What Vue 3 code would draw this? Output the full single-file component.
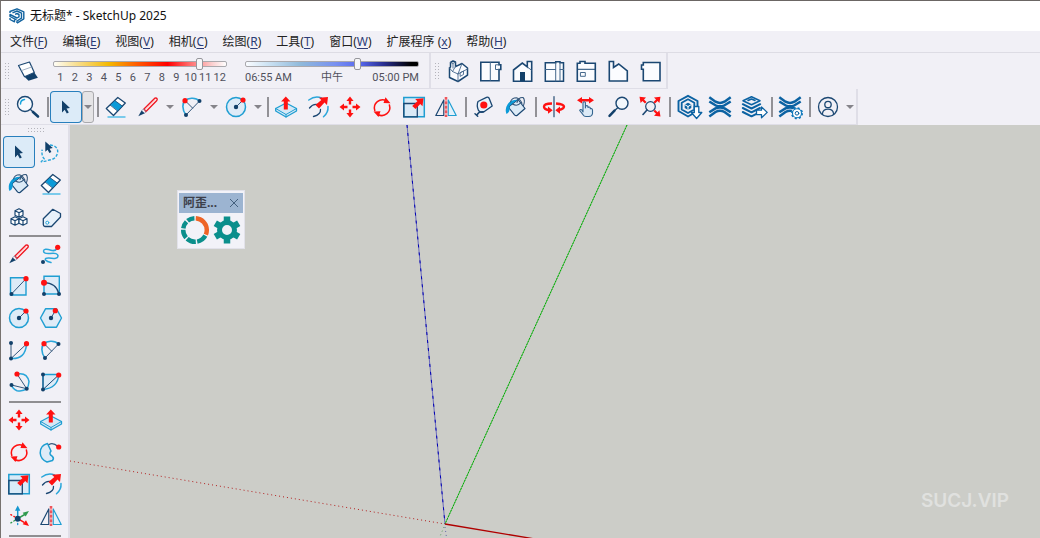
<script setup>
import { ref } from 'vue'

const menus = [
  ['文件', 'F'], ['编辑', 'E'], ['视图', 'V'], ['相机', 'C'], ['绘图', 'R'],
  ['工具', 'T'], ['窗口', 'W'], ['扩展程序 ', 'x'], ['帮助', 'H'],
]

const views = [
  ['iso', '等轴视图'], ['top', '俯视图'], ['front', '前视图'], ['right', '右视图'],
  ['back', '后视图'], ['left', '左视图'], ['bottom', '底视图'],
]

const sep = { sep: true }
const tool = (icon, label, menu = false) => ({ icon, label, menu })

const mainTools = [
  tool('search', '搜索'), sep,
  tool('cursor', '选择', true), sep,
  tool('eraser', '橡皮擦'), tool('pencil', '直线', true), tool('arc2', '圆弧', true), tool('circle', '圆', true), sep,
  tool('push', '推/拉'), tool('offset', '偏移'), tool('move', '移动'), tool('rotate', '旋转'), tool('scale', '缩放'), tool('flip', '翻转'), sep,
  tool('tape', '卷尺'), tool('paint', '材质'), sep,
  tool('orbit', '环绕观察'), tool('pan', '平移'), tool('zoom', '视图缩放'), tool('extents', '充满视窗'), sep,
  tool('warehouse', '3D Warehouse'), tool('extension', 'Extension Warehouse'), tool('layout', '发送到 LayOut'), sep,
  tool('manager', '扩展程序管理器'), sep,
  tool('user', '账户', true),
]

const sideGroups = [
  [['cursor', '选择'], ['lasso', '套索选择'], ['paint', '材质'], ['eraser', '橡皮擦'], ['component', '组件'], ['tag', '标记']],
  [['pencil', '直线'], ['freehand', '手绘线'], ['rect', '矩形'], ['rotrect', '旋转矩形'], ['circle', '圆'], ['polygon', '多边形'],
    ['arc', '圆弧'], ['arc2', '两点圆弧'], ['arc3', '三点圆弧'], ['pie', '扇形']],
  [['move', '移动'], ['push', '推/拉'], ['rotate', '旋转'], ['follow', '路径跟随'], ['scale', '缩放'], ['offset', '偏移'], ['axes', '坐标轴'], ['flip', '翻转']],
]

const active = ref('cursor')
const month = ref(861)
const time = ref(655)
const panelOpen = ref(true)
</script>

<template>
  <svg class="sprite" aria-hidden="true">
    <defs>
      <symbol id="search" viewBox="0 0 32 32">
        <circle cx="13" cy="13" r="7.5" stroke="#1b4772" stroke-width="1.4" fill="#f8fafd" />
        <path d="M8.5 13a4.5 4.5 0 0 1 4-4.500" stroke="#19a5dc" stroke-width="1.5" />
        <path d="M18.500 18.500L21 21" stroke="#1b4772" stroke-width="1.300" />
        <path d="M21 21l5 4.500" stroke="#12406a" stroke-width="2.600" />
      </symbol>
      <symbol id="cursor" viewBox="0 0 32 32">
        <path d="M12 9.500l8 7.500-3.500.5 2.300 4-2 1-2.100-3.800L12 21.500z" fill="#12406a" />
      </symbol>
      <symbol id="eraser" viewBox="0 0 32 32">
        <path d="M7.500 26h18" stroke="#6cc6ea" stroke-width="1.800" stroke-linecap="butt" />
        <path d="M6.300 17.500L17.800 6.500L25.300 12L13.500 24.500z" fill="#fff" stroke="#1b4772" stroke-width="1.300" />
        <path d="M10.300 13.700L14.800 9.500L22.400 15.100L18 19.900z" fill="#0b9bd8" stroke="#1b4772" stroke-width=".8" />
      </symbol>
      <symbol id="pencil" viewBox="0 0 32 32">
        <path d="M12 18L22.800 7.200q1.600-.6 2.200.5t-.4 2.100L14 20.500z" fill="#fff" stroke="#f01822" stroke-width="1.400" />
        <path d="M13 19.300L23.500 8.800" stroke="#f9a0a4" stroke-width=".6" />
        <path d="M6.300 25.200L9.500 19.500L12.800 22.200z" fill="#12406a" />
        <path d="M9.700 19.500l2-1.500 2.500 2.500-1.500 1.700" stroke="#6f83a0" stroke-width=".7" />
      </symbol>
      <symbol id="arc2" viewBox="0 0 32 32">
        <path d="M10 24C5.500 18 6.500 12 9 9.700S19 5.500 23.500 10" stroke="#2aa6da" stroke-width="1.600" />
        <path d="M10 24L23.500 10M9.500 10l7 7" stroke="#35587c" />
        <circle cx="23.500" cy="10" r="2" fill="#12406a" /><circle cx="10" cy="24" r="2" fill="#12406a" />
        <circle cx="9" cy="9.700" r="2.600" fill="#f11" />
      </symbol>
      <symbol id="circle" viewBox="0 0 32 32">
        <circle cx="16" cy="16" r="9.500" fill="#deebf7" stroke="#1f9ed2" stroke-width="1.500" />
        <path d="M16 16l7-7" stroke="#35587c" />
        <circle cx="16" cy="16" r="2.200" fill="#12406a" /><circle cx="23" cy="9" r="2.600" fill="#f11" />
      </symbol>
      <symbol id="push" viewBox="0 0 32 32">
        <path d="M5.700 17.500L16 12l10.500 5.500v2.500L16 26L5.700 20z" fill="#d5e8f6" stroke="#1f9ed2" stroke-width="1.300" />
        <path d="M5.700 17.500L16 23.500l10.500-6M16 23.500V26" stroke="#1f9ed2" />
        <path d="M15.800 5.500l4.700 5h-2.700v8h-4v-8h-2.700z" fill="#f11" />
      </symbol>
      <symbol id="offset" viewBox="0 0 32 32">
        <path d="M6.800 9Q13 4.500 19.500 7M26 15.500q.5 6-4.500 10.300" stroke="#2aa6da" stroke-width="1.500" />
        <path d="M7.500 17q3.500-4.500 8-3.500M18.500 18.500q.5 5-7 7" stroke="#1b4772" stroke-width="1.300" />
        <path d="M26 6l-1 8-2.500-2.500L17 17.500l-3.500-3.400L19.300 9 17 6.800z" fill="#f11" />
      </symbol>
      <symbol id="move" viewBox="0 0 32 32">
        <path d="M16 5.500l3.600 4.500h-2.400v3.500h-2.400V10h-2.400zM16 26.500l3.600-4.500h-2.400v-3.500h-2.400V22h-2.400zM5.500 16l4.500-3.600v2.400h3.500v2.400H10v2.400zM26.500 16L22 12.400v2.400h-3.500v2.400H22v2.400z" fill="#f11" />
      </symbol>
      <symbol id="rotate" viewBox="0 0 32 32">
        <path d="M8.800 19.500C6.500 12 14 6.500 20.500 9.700M23.400 14C25.500 21 18.500 27 11.800 23.500" stroke="#f11" stroke-width="1.500" />
        <path d="M19.500 6.300L24.500 12.300L17.500 12zM12.500 26L7.500 20.500l7-.2z" fill="#f11" />
      </symbol>
      <symbol id="scale" viewBox="0 0 32 32">
        <path d="M5.800 6.500h20.500v19.300H5.800z" fill="#d9eaf7" stroke="#1f9ed2" stroke-width="1.500" stroke-linejoin="miter" />
        <path d="M5.800 12.500h13.500v13.300H5.800z" stroke="#1b4772" stroke-width="1.300" stroke-linejoin="miter" />
        <path d="M25.500 7.300l-1 8-2.300-2.300-4.700 5-3.300-3 5.200-4.800-2.200-2.100z" fill="#f11" />
      </symbol>
      <symbol id="flip" viewBox="0 0 32 32">
        <path d="M13.800 9v15.500H5.800z" stroke="#1b4772" stroke-width="1.200" />
        <path d="M18.200 9v15.500h8z" fill="#e4f1fa" stroke="#1f9ed2" stroke-width="1.200" />
        <path d="M16 6v20" stroke="#f9a9ac" stroke-width="2.400" stroke-linecap="butt" />
        <path d="M16 6v20" stroke="#ee555c" stroke-width="2.400" stroke-dasharray="2.500 2" stroke-linecap="butt" />
      </symbol>
      <symbol id="tape" viewBox="0 0 32 32">
        <path d="M10 10.500l8.500-4.200q1.500-.5 2.500.7L24.200 15 16 20.800q-3 1.600-5.500-1.300-2.200-5-.5-9z" fill="#e8f1fa" stroke="#1b4772" stroke-width="1.300" />
        <path d="M15.500 20.800q-4.300-.7-6.300 2.700M7 22.800l2.700 2.500" stroke="#1b4772" stroke-width="1.500" />
        <circle cx="15.800" cy="14" r="3.600" fill="#f11" />
      </symbol>
      <symbol id="paint" viewBox="0 0 32 32">
        <path d="M9.500 15L18 8.500l7 9L17 24.500q-1.300.6-2.500-.6L9 17z" fill="#dceaf6" stroke="#1b4772" stroke-width="1.200" />
        <path d="M6.500 23q-2-5 1-9.500Q10 8.700 17.500 8.800L9.500 15q1.200 6-3 8z" fill="#0b9bd8" />
        <path d="M10.500 11q1-4.300 6-4.300 3.500 1 5.500 5.500M17 11.500q1.500-5.500 6-5 2.500 2.500.5 8M12.500 13q5 3 8.500-1.500" stroke="#35587c" stroke-width="1.100" />
      </symbol>
      <symbol id="orbit" viewBox="0 0 32 32">
        <path d="M14 12.500C8 12.500 6 14 6 15.700q0 2.500 5 3.500M18 12.500q8 .8 8 3.200-.3 2.500-5.200 3.300" stroke="#f11" stroke-width="2.400" stroke-linecap="butt" />
        <path d="M10 15.500l4.700 3.700L10 22.700zM22 15.500l-4.700 3.700L22 22.700z" fill="#f11" />
        <path d="M16 5.700v20" stroke="#35587c" stroke-width="1.300" />
      </symbol>
      <symbol id="pan" viewBox="0 0 32 32">
        <path d="M7 9.200l5-3.200v2h7V6l5 3.200-5 3.200v-2h-7v2z" fill="#f11" />
        <path d="M13 21V11.500q1.200-1.500 2.400 0V17l.2-2q1.300-1 2.400.3v1.200q1.300-1 2.300.3v.9q2-.5 2.200 1.300v3.500q-.5 3-3.500 3h-3q-2 0-3-1.800L9.700 19.500q.5-1.500 2-.7z" fill="#dceaf6" stroke="#35658f" stroke-width="1.100" />
      </symbol>
      <symbol id="zoom" viewBox="0 0 32 32">
        <circle cx="20" cy="12.300" r="6" fill="#f2f7fc" stroke="#1b4772" stroke-width="1.400" />
        <path d="M15.700 16.700l-3 2.800" stroke="#1b4772" stroke-width="1.300" /><path d="M12.500 19.700L7.500 24.800" stroke="#12406a" stroke-width="2.500" />
      </symbol>
      <symbol id="extents" viewBox="0 0 32 32">
        <circle cx="16.500" cy="15.500" r="4.800" stroke="#1b4772" stroke-width="1.200" />
        <path d="M13 19l-4 4.500" stroke="#1b4772" stroke-width="1.600" />
        <path d="M5.500 5.800l6.500.8-2 2 2.500 2.400-1.500 1.600L8.400 10l-1.800 2zM26.500 5.800l-6.500.8 2 2-2.500 2.400 1.500 1.600 2.600-2.600 1.800 2zM26.500 25.500l-6.500-.8 2-2-2.500-2.400 1.500-1.600 2.600 2.600 1.800-2z" fill="#f11" />
      </symbol>
      <symbol id="warehouse" viewBox="0 0 32 32">
        <path d="M16 4.800l9.500 5.200v10L16 25.500 6.500 20V10z" stroke="#0b62a2" stroke-width="1.900" />
        <path d="M16 8.300l6.300 3.500v6.700L16 22l-6.300-3.500v-6.700z" stroke="#0b62a2" stroke-width="1.800" />
        <path d="M16 11.800l3.300 1.800v3.500L16 19l-3.300-1.900v-3.500z" fill="#0b62a2" />
        <path d="M16 15.500V19M16 15.500l-3-1.700M16 15.500l3-1.700" stroke="#fff" />
        <path d="M22.300 15.500h4.500v6h3l-5.200 6-5.200-6h2.900z" fill="#fff" stroke="#0b62a2" stroke-width="1.300" />
      </symbol>
      <symbol id="cross" viewBox="0 0 32 32">
        <path d="M5.300 6.200l6.200 4.500q4.500 2.600 9 0l6.200-4.500M5.300 10.500l6.200 3.800q4.500 2 9 0l6.200-3.800M5.300 21.200l6.200-3.800q4.500-2 9 0l6.200 3.800M5.300 25.500l6.200-4.500q4.500-2.600 9 0l6.200 4.500" stroke="#0b62a2" stroke-width="2.500" stroke-linecap="butt" />
      </symbol>
      <symbol id="extension" viewBox="0 0 32 32"><use href="#cross" width="32" height="32" /></symbol>
      <symbol id="layout" viewBox="0 0 32 32">
        <path d="M7 9.700l8.500-4 8.500 4-8.500 4zM12 9.500l3.500-1.500 3.500 1.500" stroke="#0b62a2" stroke-width="1.500" />
        <path d="M6.800 13.200l8.700 4.300 8.700-4.300M6.800 17l8.700 4.300L24 17M6.800 21l8.700 4.300 5-2.500" stroke="#0b62a2" stroke-width="2" />
        <path d="M20.500 19.200h5v-3.200l5.700 5.400-5.700 5.400v-3.200h-5z" fill="#fff" stroke="#0b62a2" stroke-width="1.300" />
      </symbol>
      <symbol id="manager" viewBox="0 0 32 32">
        <use href="#cross" width="32" height="32" />
        <circle cx="23" cy="22.300" r="5.700" fill="#f0f0f6" />
        <circle cx="23" cy="22.300" r="4.500" fill="#fff" stroke="#0b76ba" stroke-width="1.100" />
        <circle cx="23" cy="22.300" r="5.300" stroke="#0b76ba" stroke-width="1.500" stroke-dasharray="2.100 2.060" stroke-linecap="butt" />
        <circle cx="23" cy="22.300" r="1.800" stroke="#0b62a2" />
      </symbol>
      <symbol id="user" viewBox="0 0 32 32">
        <circle cx="16" cy="16" r="9.500" stroke="#1b4772" stroke-width="1.300" />
        <circle cx="16" cy="13.500" r="3.200" stroke="#1b4772" stroke-width="1.300" />
        <path d="M10.500 22.500q.5-4.300 5.500-4.300t5.500 4.300" stroke="#1b4772" stroke-width="1.300" />
      </symbol>
      <symbol id="shadow" viewBox="0 0 32 32">
        <path d="M12.500 21.700L22.300 17.500l3.600 5.200-9.400 3z" fill="#12406a" />
        <path d="M6.500 10.500L17.500 7l4.800 10.500-9.800 4.200z" fill="#fff" stroke="#1b4772" stroke-width="1.200" />
        <path d="M9.700 15.500l10.500-3.700" stroke="#8b9db4" stroke-width=".8" />
      </symbol>
      <symbol id="iso" viewBox="0 0 32 32">
        <path d="M7.500 13v9.500l8.500 4 9.500-6.300V13L20 8.500l-6.500 3.200V7l-2.500-1-2.500 1.500v4.500z" fill="#fbfcff" stroke="#1b4772" stroke-width="1.500" />
        <path d="M7.500 13l3 3.500 3-5M10.500 16.500l5.500 2.500 4-10.500M16 19v7.500M16 19l9.500-5M8.500 7.500l2.500 1v4.500M11 8.500L13.500 7" stroke="#45688c" stroke-width=".9" />
        <path d="M18.500 17.500l3-1.500v3.500l-3 1.700z" stroke="#45688c" stroke-width=".9" />
      </symbol>
      <symbol id="top" viewBox="0 0 32 32">
        <path d="M6.800 7.200H25v2.600h1.800v4.700H25V25.800H6.800z" fill="#fbfcff" stroke="#1b4772" stroke-width="1.600" stroke-linejoin="miter" />
        <path d="M16.300 7.500v18M25 9.800h-3.500v4.700H25" stroke="#45688c" />
      </symbol>
      <symbol id="front" viewBox="0 0 32 32">
        <path d="M7.500 26.200V15L16.300 8l5 3.900V6.500h4.400v19.700z" fill="#fbfcff" stroke="#1b4772" stroke-width="1.600" stroke-linejoin="miter" />
        <path d="M21.300 12l4 3" stroke="#45688c" /><path d="M14 17h5v9h-5z" fill="#12406a" />
      </symbol>
      <symbol id="right" viewBox="0 0 32 32">
        <path d="M7.300 7.800h10.400V6.700h4.300v1.100h3.500v18.500H7.300z" fill="#fbfcff" stroke="#1b4772" stroke-width="1.500" stroke-linejoin="miter" />
        <path d="M7.500 14.500h10M22 14.500h3.500M17.700 8v18M22 8v18" stroke="#45688c" />
      </symbol>
      <symbol id="back" viewBox="0 0 32 32">
        <path d="M7.300 8.300H10V6.500h5v1.800h10.300v18H7.300z" fill="#fbfcff" stroke="#1b4772" stroke-width="1.600" stroke-linejoin="miter" />
        <path d="M7.500 14.300h18" stroke="#1b4772" /><path d="M10.800 17.500h4.500v3.800h-4.500z" stroke="#45688c" />
      </symbol>
      <symbol id="left" viewBox="0 0 32 32">
        <path d="M7.300 26V6.500h4.200v6L16.700 9l8.600 7v10z" fill="#fbfcff" stroke="#1b4772" stroke-width="1.600" stroke-linejoin="miter" />
      </symbol>
      <symbol id="bottom" viewBox="0 0 32 32">
        <path d="M9.300 7.500H26v18.300H9.300V14.300H7.500V10h1.800z" fill="#fbfcff" stroke="#1b4772" stroke-width="1.600" stroke-linejoin="miter" />
      </symbol>
      <symbol id="lasso" viewBox="0 0 32 32">
        <path d="M15 9q8 1 7.700 7-1 6-6 7.500-3.500.8-6.500 1.700l-4 .5 3-3q-3-3-2-9" stroke="#2aa6da" stroke-width="1.400" stroke-dasharray="3 1.500" stroke-linecap="butt" />
        <path d="M10.300 5.500l7.500 6.500-3.200.8 1.800 3.200-2 1-1.800-3.200-2.300 2z" fill="#12406a" />
      </symbol>
      <symbol id="component" viewBox="0 0 32 32">
        <g fill="#fff" stroke="#1b4772" stroke-width="1.200">
          <path d="M16 8.700l4 2v4.500l-4 2-4-2v-4.500zM12 10.700l4 2 4-2M16 12.700v4.500" />
          <path d="M12 16.700l4 2v4.500l-4 2-4-2v-4.500zM8 18.700l4 2 4-2M12 20.700v4.500" />
          <path d="M20 16.700l4 2v4.500l-4 2-4-2v-4.500zM16 18.700l4 2 4-2M20 20.700v4.500" />
        </g>
      </symbol>
      <symbol id="tag" viewBox="0 0 32 32">
        <path d="M8.300 18.800L17.800 9.300l7.700 4.200v3.500L16.500 26.500H10q-1.700-.2-1.700-2z" fill="#e8f1fa" stroke="#1b4772" stroke-width="1.300" />
        <circle cx="12.300" cy="22.700" r="1.500" fill="#fff" stroke="#2aa6da" />
      </symbol>
      <symbol id="freehand" viewBox="0 0 32 32">
        <path d="M22.500 10q-2.500 3.700-6.500 2.200Q9 10 8.500 13q0 3 6.500 2.500 8-1 8 2.500T14 20q-4.500-.2-3.500 2 1.500 1.700 5.500 2.500" stroke="#2aa6da" stroke-width="1.500" />
        <circle cx="22.700" cy="9.300" r="2.600" fill="#f11" /><circle cx="8" cy="24" r="2" fill="#12406a" />
      </symbol>
      <symbol id="rect" viewBox="0 0 32 32">
        <path d="M7.500 7.700H23V25H7.500z" fill="#deebf7" stroke="#1f9ed2" stroke-width="1.400" stroke-linejoin="miter" />
        <path d="M8.500 24L23 8.700" stroke="#35587c" /><circle cx="23" cy="8.700" r="2.600" fill="#f11" /><circle cx="8.500" cy="24" r="2" fill="#12406a" />
      </symbol>
      <symbol id="rotrect" viewBox="0 0 32 32">
        <path d="M9 6.200h15.300V24H9z" fill="#deebf7" stroke="#1f9ed2" stroke-width="1.400" stroke-linejoin="miter" />
        <path d="M9 12.700q12 0 15 11.300" stroke="#1b4772" stroke-width="1.200" />
        <circle cx="9" cy="12.700" r="3" fill="#f11" /><circle cx="9" cy="24" r="2" fill="#12406a" /><circle cx="24" cy="24" r="2" fill="#12406a" />
      </symbol>
      <symbol id="polygon" viewBox="0 0 32 32">
        <path d="M5.500 16l5-9.200h11l5 9.200-5 9.200h-11z" fill="#deebf7" stroke="#1f9ed2" stroke-width="1.400" />
        <path d="M16 16l4.300-7.300" stroke="#35587c" /><circle cx="16" cy="16" r="2.200" fill="#12406a" /><circle cx="20.300" cy="8.700" r="2.600" fill="#f11" />
      </symbol>
      <symbol id="arc" viewBox="0 0 32 32">
        <path d="M8 24.500Q22.500 25.500 23.500 10" stroke="#2aa6da" stroke-width="1.500" />
        <path d="M8 9v15.500L23.500 10" stroke="#35587c" /><circle cx="8" cy="9" r="2" fill="#12406a" /><circle cx="8" cy="24.500" r="2" fill="#12406a" /><circle cx="23.500" cy="9.700" r="2.600" fill="#f11" />
      </symbol>
      <symbol id="arc3" viewBox="0 0 32 32">
        <path d="M14 8q10-2 12 7.500-.5 5-2 7.200-4 3-10 2-4.500-2-5.500-5.700" stroke="#2aa6da" stroke-width="1.500" />
        <path d="M8.500 19l15.200 3.700L14 8" stroke="#35587c" /><circle cx="8.500" cy="19" r="2" fill="#12406a" /><circle cx="23.700" cy="22.700" r="2" fill="#12406a" /><circle cx="14" cy="8" r="2.600" fill="#f11" />
      </symbol>
      <symbol id="pie" viewBox="0 0 32 32">
        <path d="M8 8.500h15.700Q23 22 8 23.500z" fill="#deebf7" stroke="#1f9ed2" stroke-width="1.400" />
        <path d="M8 8.500v15L23.700 9" stroke="#1b4772" /><circle cx="8" cy="8.500" r="2" fill="#12406a" /><circle cx="8" cy="23.500" r="2" fill="#12406a" /><circle cx="23.700" cy="9" r="2.600" fill="#f11" />
      </symbol>
      <symbol id="follow" viewBox="0 0 32 32">
        <path d="M12.500 7.500q-7.500 2-7.300 9.500.5 6.500 6.800 9l5.500-1.500q2-2.500-.5-4.500-3.500-2-1-5z" fill="#deebf7" stroke="#1f9ed2" stroke-width="1.500" />
        <path d="M14 8.500q4-2.500 9 2" stroke="#35587c" stroke-width="1.300" />
        <circle cx="23.700" cy="11" r="2.600" fill="#f11" />
      </symbol>
      <symbol id="axes" viewBox="0 0 32 32">
        <path d="M14.700 18V9" stroke="#1697d0" stroke-width="1.500" /><path d="M14.700 5.500l2.700 5.200H12z" fill="#1697d0" />
        <path d="M14.700 18.700l7-4.200" stroke="#2f9b4e" stroke-width="1.500" /><path d="M26 11l-3.300 5.500-3-3.800z" fill="#2f9b4e" />
        <path d="M14.700 18.700l6 3.500" stroke="#f11" stroke-width="1.500" /><path d="M26 26l-6.300-1.700 3.300-4z" fill="#f11" />
        <path d="M14.700 18.700L6 13.500" stroke="#f11" stroke-width="1.300" stroke-dasharray="1 2.500" /><path d="M14.700 18.700L6 24" stroke="#2f9b4e" stroke-width="1.300" stroke-dasharray="1 2.500" /><path d="M14.700 20v6.500" stroke="#1697d0" stroke-width="1.300" stroke-dasharray="1 2.500" />
        <circle cx="14.700" cy="18.700" r="2.900" fill="#12406a" />
      </symbol>
    </defs>
  </svg>

  <div class="window">
    <header class="titlebar">
      <svg class="logo" viewBox="0 0 16 16" fill="none" stroke="#12639f" stroke-width="1.400" stroke-linejoin="round" aria-hidden="true">
        <path d="M1 5V3.500L8 .8l6.800 3v7L8 15.200" />
        <path d="M3.500 4.800L8 3l4.500 2.200v5L8 13v2M6 6.300l2-.8 2 1v2.300L8 10 1 6.500v2l6.500 3.300M1 10v1.500l4.500 2.300v-2" />
      </svg>
      <h1>无标题* - SketchUp 2025</h1>
    </header>

    <nav class="menubar">
      <a v-for="[name, key] in menus" :key="key" href="#">{{ name }}(<u>{{ key }}</u>)</a>
    </nav>

    <div class="bars">
      <div class="row">
        <section class="bar shadows">
          <span class="grip"></span>
          <button class="tool" aria-label="阴影"><svg><use href="#shadow" /></svg></button>
          <div class="slider">
            <input v-model="month" class="month" type="range" min="0" max="1000" aria-label="月份" />
            <div class="months"><span v-for="n in 12" :key="n">{{ n }}</span></div>
          </div>
          <div class="slider">
            <input v-model="time" class="time" type="range" min="0" max="1000" aria-label="时间" />
            <div class="hours"><span>06:55 AM</span><span>中午</span><span>05:00 PM</span></div>
          </div>
        </section>
        <section class="bar">
          <span class="grip"></span>
          <button v-for="[icon, label] in views" :key="icon" class="tool" :aria-label="label"><svg><use :href="'#' + icon" /></svg></button>
        </section>
      </div>

      <div class="row">
        <section class="bar">
          <span class="grip"></span>
          <template v-for="(t, i) in mainTools" :key="i">
            <span v-if="t.sep" class="vsep"></span>
            <template v-else>
              <button class="tool" :class="{ active: active === t.icon }" :aria-label="t.label" @click="active = t.icon"><svg><use :href="'#' + t.icon" /></svg></button>
              <button v-if="t.menu" class="drop" :class="{ raised: active === t.icon }" :aria-label="t.label + '菜单'"></button>
            </template>
          </template>
        </section>
      </div>
    </div>

    <main class="workspace">
      <aside class="side">
        <span class="grip wide"></span>
        <div v-for="(group, g) in sideGroups" :key="g" class="group">
          <button v-for="[icon, label] in group" :key="icon" class="tool" :class="{ active: active === icon }" :aria-label="label" @click="active = icon"><svg><use :href="'#' + icon" /></svg></button>
        </div>
      </aside>

      <section class="canvas">
        <svg class="axis-lines" aria-hidden="true">
          <path d="M337 0L375 399" stroke="#6a6abc" />
          <path d="M337 0L375 399" stroke="#0000b4" stroke-dasharray="3 5" />
          <path d="M557 0L375 399" stroke="#76bd76" />
          <path d="M557 0L375 399" stroke="#00ad00" stroke-dasharray="2 1" />
          <path d="M0 336L375 399" stroke="#b32020" stroke-dasharray="1 3" />
          <path d="M375 399L555 429" stroke="#b00000" stroke-width="1.300" />
          <path d="M374 402L368 416" stroke="#5b9c5b" stroke-dasharray="1 3" />
          <path d="M375 402l2 14" stroke="#6363aa" stroke-dasharray="1 3" />
        </svg>

        <div v-if="panelOpen" class="panel">
          <div class="panel-title"><span>阿歪...</span>
            <button aria-label="关闭" @click="panelOpen = false"><svg viewBox="0 0 10 10" fill="none" stroke="#44607f"><path d="M1 1l8 8M9 1L1 9" /></svg></button>
          </div>
          <div class="panel-tools">
            <button class="tool" aria-label="进度">
              <svg class="ring" viewBox="0 0 32 32">
                <circle cx="16" cy="16" r="11.800" pathLength="360" stroke="#ee6426" stroke-dasharray="0 4 109 247" />
                <circle cx="16" cy="16" r="11.800" pathLength="360" stroke="#0b8f8c" stroke-dasharray="0 119 50 7 46 7 42 7 36 7 36 3" />
              </svg>
            </button>
            <button class="tool" aria-label="设置">
              <svg class="gear" viewBox="0 0 32 32">
                <circle cx="16" cy="16" r="7.500" stroke-width="5" />
                <path d="M16 2.500v6M16 23.500v6M4.300 9.300l5.200 3M22.500 19.700l5.200 3M4.300 22.700l5.200-3M22.500 12.300l5.200-3" stroke-width="6.500" />
              </svg>
            </button>
          </div>
        </div>

        <p class="mark">SUCJ.VIP</p>
      </section>
    </main>
  </div>
</template>

<style>
body { background: #cccdc8; overflow: hidden; }
</style>

<style scoped>
.sprite { position: absolute; width: 0; height: 0; }
.window {
  box-sizing: border-box;
  display: flex;
  flex-direction: column;
  height: 100vh;
  overflow: hidden;
  border-top: 1px solid #6b6664;
  border-left: 1px solid #77726f;
  background: #f1f0f6;
  color: #111;
  font: 12px/16px "Noto Sans", "Noto Sans CJK SC", sans-serif;
}
.titlebar { display: flex; align-items: center; gap: 5px; height: 30px; padding-left: 8px; background: #fff; }
.logo { width: 16px; height: 16px; }
h1 { margin: 0; font: inherit; }
.menubar { display: flex; align-items: center; gap: 15px; height: 21px; padding-left: 9px; border-bottom: 1px solid #dddce4; }
.menubar a { color: #222; text-decoration: none; white-space: pre; }
.menubar u { color: #2c3c77; text-underline-offset: 2px; }
.row { display: flex; height: 36px; }
.bar { box-sizing: border-box; display: flex; align-items: center; padding-top: 1px; border: solid #dfdee7; border-width: 0 2px 1px 0; }
.grip {
  flex: none;
  width: 5px;
  height: 18px;
  margin: 0 3px;
  background: radial-gradient(circle, #b4b4bb 0 1px, transparent 1px) 0 0 / 3px 3px;
}
.grip.wide { display: block; width: 18px; height: 6px; margin: 2px auto 3px; }
button { padding: 0; border: 0; background: none; color: inherit; font: inherit; }
.tool { flex: none; box-sizing: border-box; display: grid; place-items: center; width: 32px; height: 32px; border-radius: 4px; }
.tool svg { width: 32px; height: 32px; fill: none; stroke-linecap: round; stroke-linejoin: round; }
.tool.active { background: #dcebf8; box-shadow: inset 0 0 0 1px #287fbd; }
.drop { box-sizing: border-box; display: grid; place-items: center; width: 12px; height: 32px; border-radius: 3px; }
.drop::before { content: ""; border: 4px solid transparent; border-top-color: #85848a; border-bottom: 0; }
.drop.raised { border: 1px solid #a9a9ad; background: #e5e4e6; }
.vsep { flex: none; box-sizing: border-box; width: 6px; height: 20px; border: solid transparent; border-width: 0 1px 0 3px; background: #929196 padding-box; }

.slider { width: 174px; padding-top: 4px; color: #50505c; font: 11px/14px Roboto, "Noto Sans CJK SC", sans-serif; }
.shadows { width: 430px; }
.slider:nth-of-type(1) { margin: 0 18px 0 9px; }
input { appearance: none; display: block; width: 100%; height: 6px; margin: 0 0 4px; border: 1px solid #aaa9ad; border-radius: 2px; box-sizing: border-box; }
.month { background: linear-gradient(90deg, #fffef6, #f8e199 12%, #f4b800 32%, #ff5c00 48%, #f00 66%, #f66 78%, #fbd0d0 92%, #fff); }
.time { background: linear-gradient(90deg, #fafcff, #cfe4f4 12%, #8fb9da 32%, #7890f0 52%, #5869ef 66%, #292f91 80%, #000 96%); }
input::-webkit-slider-thumb { appearance: none; width: 7px; height: 12px; border: 1px solid #96969c; border-radius: 2px; background: #f6f6f8; box-sizing: border-box; }
.months { display: flex; }
.months span { flex: 1 0 0; text-align: center; }
.hours { display: flex; justify-content: space-between; }

.workspace { flex: 1; display: flex; min-height: 0; }
.side { flex: none; box-sizing: border-box; width: 69px; padding-left: 2px; border-right: 2px solid #dfdee7; overflow: hidden; }
.group { display: grid; grid-template-columns: 32px 32px; }
.group::after { content: ""; grid-column: 1 / -1; box-sizing: border-box; height: 6px; margin: 0 6px; border: solid transparent; border-width: 3px 0 1px; background: #8f8e91 padding-box; }
.canvas { position: relative; flex: 1; background: #cccdc8; overflow: hidden; }
.axis-lines { position: absolute; inset: 0; width: 100%; height: 100%; fill: none; }
.panel { position: absolute; left: 107px; top: 65px; padding: 2px 1px; border: 1px solid #e2e2ea; background: #f2f2f8; }
.panel-title { display: flex; align-items: center; justify-content: space-between; height: 20px; padding: 0 4px; background: #9cb4d1; color: #3c3f4a; font-weight: 700; }
.panel-title svg { display: block; width: 10px; height: 10px; }
.panel-tools { display: flex; padding-top: 1px; }
.panel .ring { stroke-width: 4.5; stroke-linecap: butt; transform: rotate(-90deg); }
.panel .gear { stroke: #0b8f8c; stroke-linecap: butt; }
.mark { position: absolute; right: 31px; bottom: 25px; margin: 0; color: #e0e1df; font: 600 19px/24px Inter, sans-serif; }
</style>
